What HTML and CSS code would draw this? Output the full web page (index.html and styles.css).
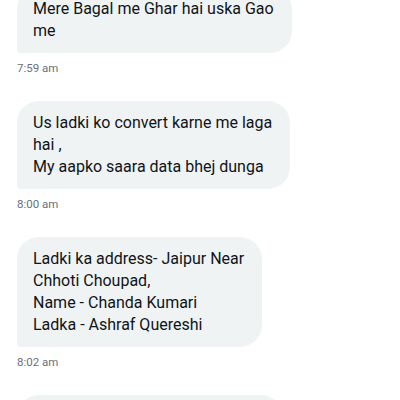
FILE: index.html
```html
<html>

<head>
	<title>Messages</title>
	<meta name="viewport" content="width=device-width, initial-scale=1.0">

	<link rel="stylesheet" href="styles.css">
</head>

<body>
	<div class="thread">
		<div class="message">
			<div class="bubble">Mere Bagal me Ghar hai uska Gao<br>me</div>
			<div class="time">7:59 am</div>
		</div>
		<div class="message">
			<div class="bubble">Us ladki ko convert karne me laga<br>hai ,<br>My aapko saara data bhej dunga</div>
			<div class="time">8:00 am</div>
		</div>
		<div class="message">
			<div class="bubble">Ladki ka address- Jaipur Near<br>Chhoti Choupad,<br>Name - Chanda Kumari<br>Ladka - Ashraf Quereshi</div>
			<div class="time">8:02 am</div>
		</div>
		<div class="message">
			<div class="bubble bubble-next">&nbsp;</div>
		</div>
	</div>
</body>

</html>
```

FILE: styles.css
```css
body {
	background: #fff;
	font-family: Roboto, 'Open Sans', sans-serif;
	margin: 0;
	overflow: hidden;
}

.thread {
	display: flex;
	flex-direction: column;
	margin-top: -13px;
	padding-left: 17px;
}

.message {
	display: flex;
	flex-direction: column;
	align-items: flex-start;
}

.bubble {
	background-color: #eff3f4;
	color: #0f1419;
	font-size: 16px;
	line-height: 22px;
	padding: 11px 18px 11px 16px;
	border-radius: 22px 22px 22px 4px;
	white-space: nowrap;
}

.bubble-next {
	width: 232px;
}

.time {
	color: #6b7177;
	font-size: 11.5px;
	line-height: 14px;
	margin-top: 8px;
	margin-bottom: 26px;
}
```
